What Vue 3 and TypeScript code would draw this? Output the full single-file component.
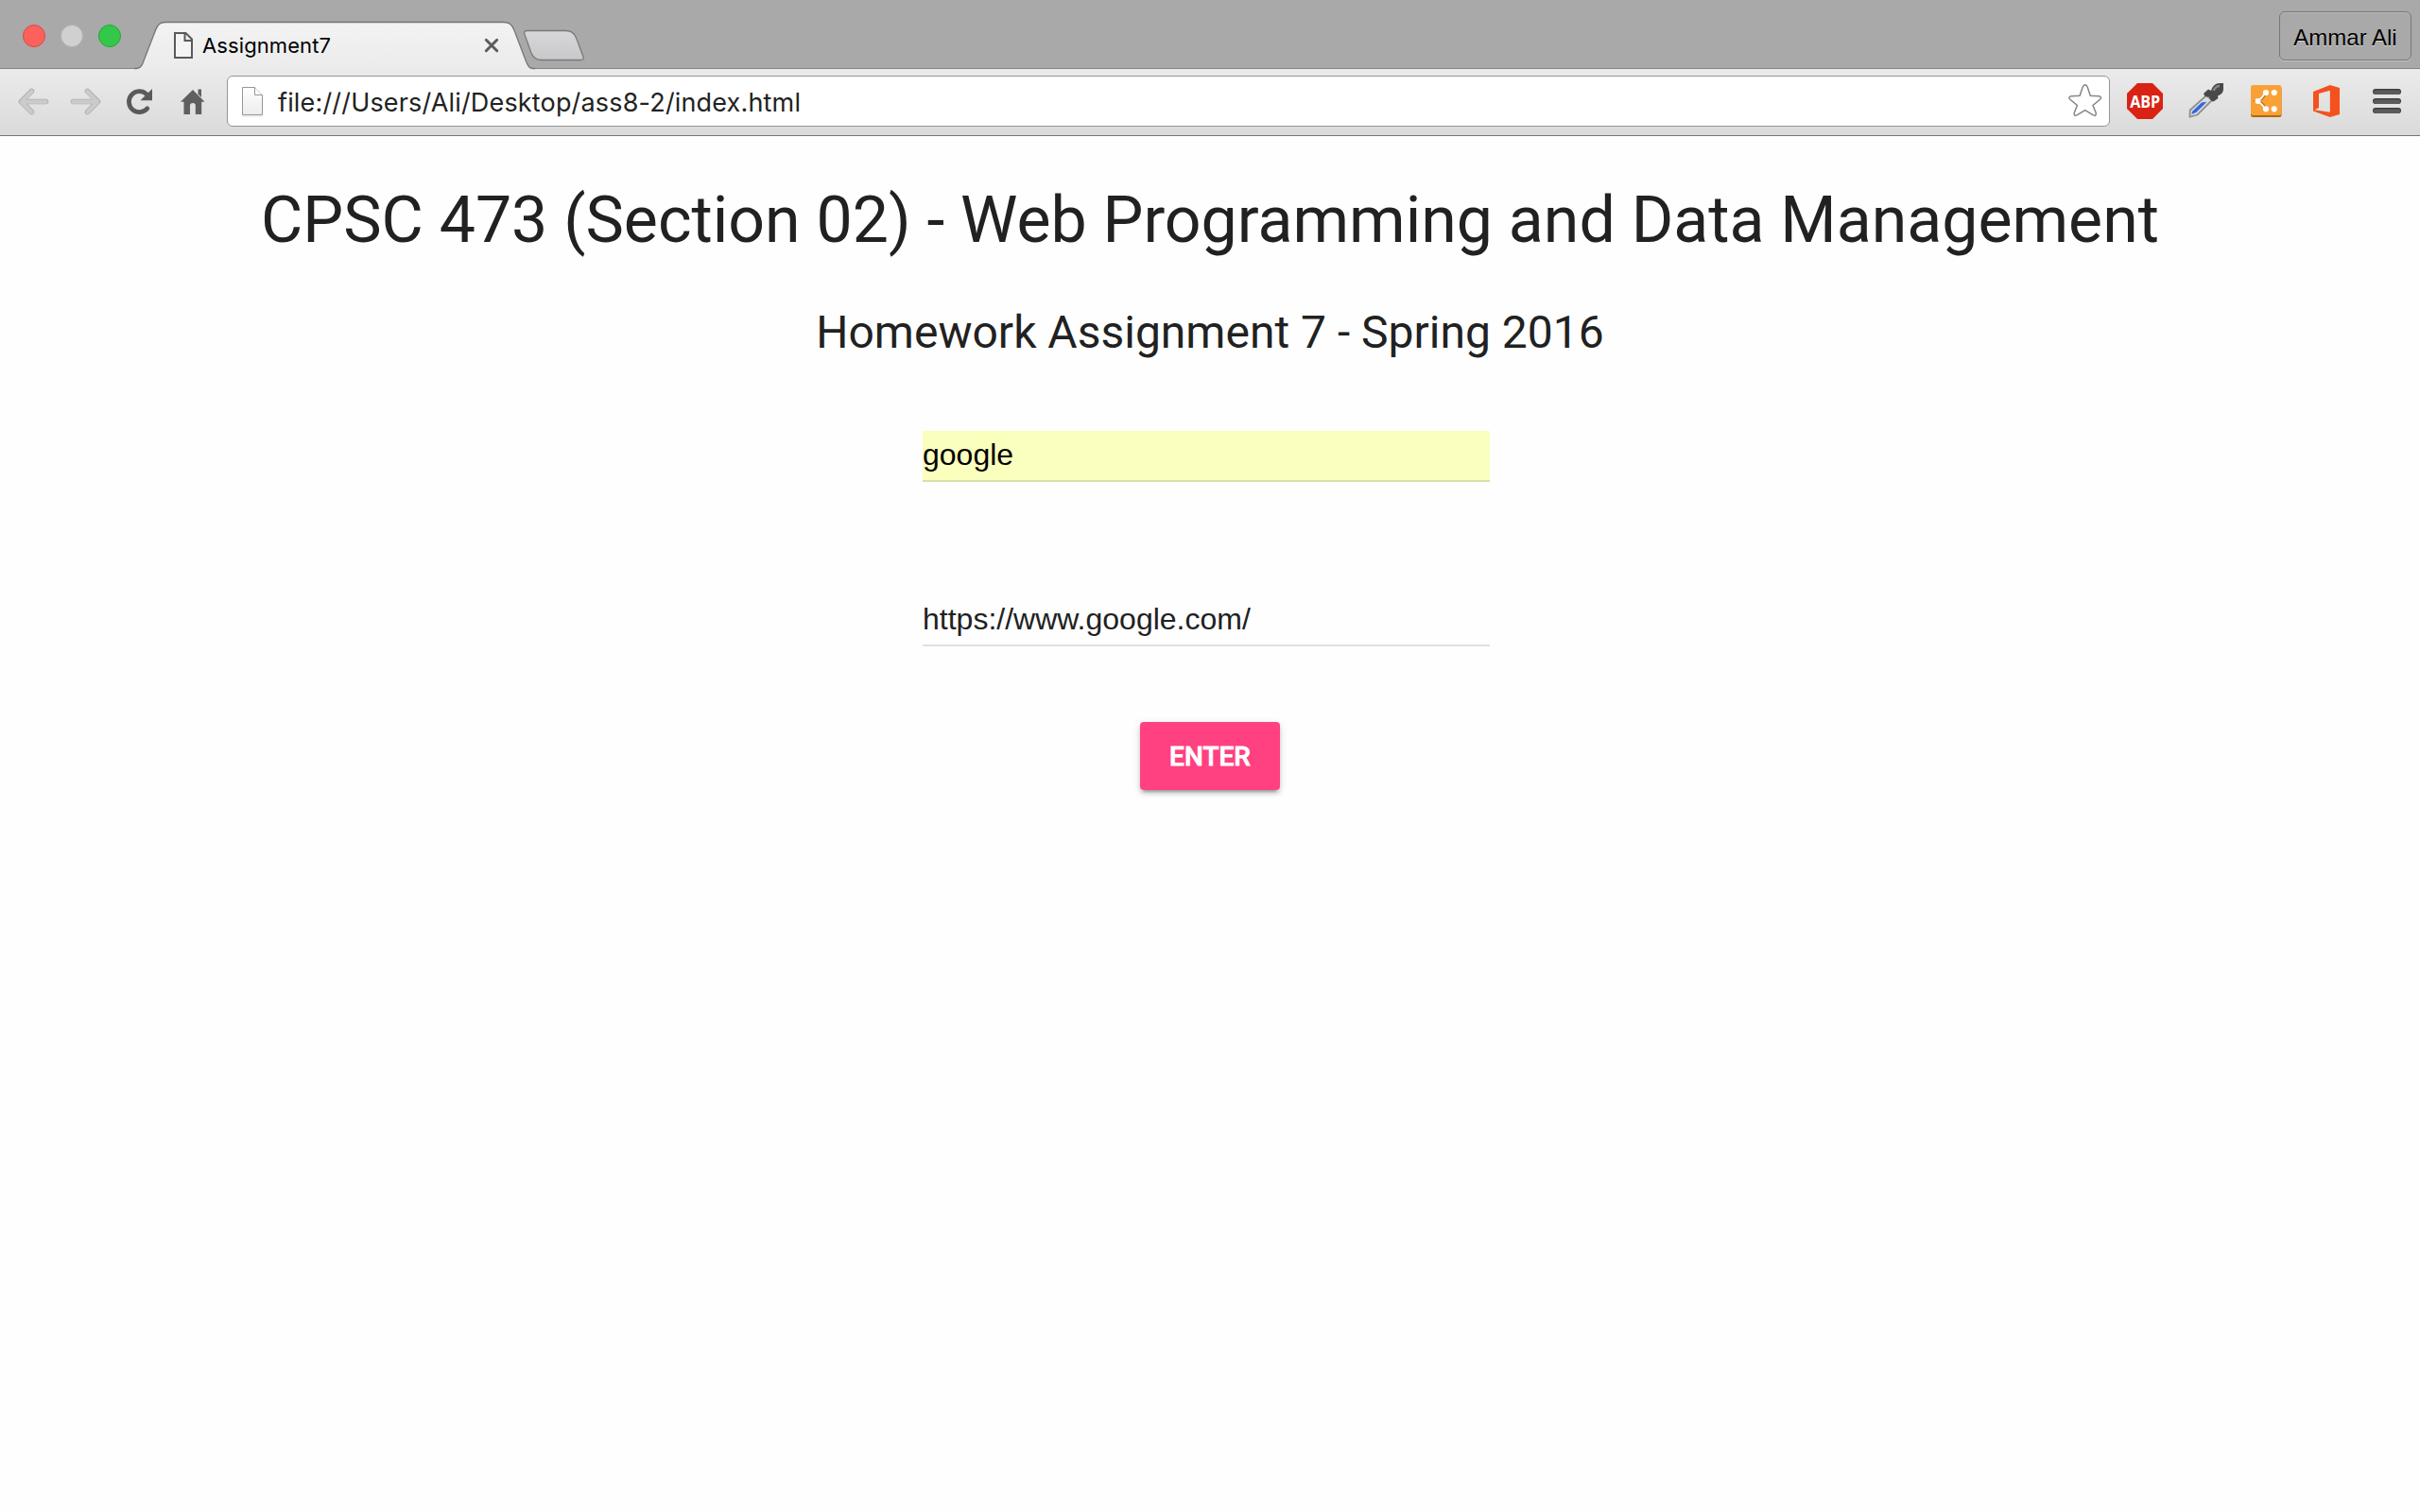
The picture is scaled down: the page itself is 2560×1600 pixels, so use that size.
<script setup lang="ts">
import { ref } from 'vue'

const tabTitle = ref('Assignment7')
const profile = ref('Ammar Ali')
const address = ref('file:///Users/Ali/Desktop/ass8-2/index.html')
const siteName = ref('google')
const siteLink = ref('https://www.google.com/')
</script>

<template>
  <div class="window">
    <header class="tabstrip">
      <div class="lights">
        <span class="light close"></span>
        <span class="light idle"></span>
        <span class="light zoom"></span>
      </div>
      <div class="tab">
        <svg class="tab-shape" viewBox="142 20 424 54" width="424" height="54">
          <defs>
            <linearGradient id="tabFill" x1="0" y1="0" x2="0" y2="1">
              <stop offset="0" stop-color="#f3f3f3" />
              <stop offset="1" stop-color="#ebebeb" />
            </linearGradient>
          </defs>
          <path d="M142 74V72.5H144C148 72.5 149.500 70.500 151 67L164.500 32C167 26 169 23.500 175 23.500H533C539 23.500 541.500 26 544 32L556.500 65C559 71 560.500 72.500 564 72.500H566V74Z" fill="url(#tabFill)" />
          <path d="M142 72.5H144C148 72.5 149.500 70.500 151 67L164.500 32C167 26 169 23.500 175 23.500H533C539 23.500 541.500 26 544 32L556.500 65C559 71 560.500 72.500 564 72.500H566" fill="none" stroke="#767676" stroke-width="1.3" />
        </svg>
        <svg class="tab-page" viewBox="184 34 20 28" width="20" height="28">
          <path d="M185 35H196.500L203 41.500V61H185ZM195.500 35V43H203" fill="#f4f4f4" stroke="#5a5a5a" stroke-width="2" />
        </svg>
        <span class="tab-title">{{ tabTitle }}</span>
        <svg class="tab-close" viewBox="512 40 16 16" width="16" height="16">
          <path d="M514.300 42.300L525.700 53.700M525.700 42.300L514.300 53.700" stroke="#5c5c5c" stroke-width="3" stroke-linecap="round" />
        </svg>
      </div>
      <svg class="new-tab" viewBox="553 31 66 34" width="66" height="34">
        <defs>
          <linearGradient id="newFill" x1="0" y1="0" x2="0" y2="1">
            <stop offset="0" stop-color="#d8d8da" />
            <stop offset="1" stop-color="#c8c8ca" />
          </linearGradient>
        </defs>
        <path d="M557.500 32.500H599C605 32.500 607.500 35 609.500 40L617 60C618 62.500 616.500 63.500 614.500 63.500H573C567 63.500 564 61 562 56L555 36.500C554 34 555 32.500 557.500 32.500Z" fill="url(#newFill)" stroke="#7a7a7a" stroke-width="1.300" />
      </svg>
      <div class="profile">{{ profile }}</div>
    </header>

    <nav class="toolbar">
      <svg class="back" viewBox="19 92 34 31" width="34" height="31">
        <g fill="none" stroke-linecap="round" stroke-linejoin="round">
          <path d="M33.500 96.500L22.500 107.500L33.500 118.500M23.500 107.500H48.500" stroke="#adadad" stroke-width="5.600" />
          <path d="M33.500 96.800L22.800 107.700L33.500 118.600M23.500 107.700H48.500" stroke="#cbcbcb" stroke-width="4.200" />
        </g>
      </svg>
      <svg class="forward" viewBox="73 92 34 31" width="34" height="31">
        <g fill="none" stroke-linecap="round" stroke-linejoin="round">
          <path d="M92.500 96.500L103.500 107.500L92.500 118.500M102.500 107.500H77.500" stroke="#adadad" stroke-width="5.600" />
          <path d="M92.500 96.800L103.200 107.700L92.500 118.600M102.500 107.700H77.500" stroke="#cbcbcb" stroke-width="4.200" />
        </g>
      </svg>
      <svg class="reload" viewBox="132 92 32 31" width="32" height="31">
        <path d="M155.800 114.800A11 11 0 1 1 154.800 99.500" fill="none" stroke="#5a5a5a" stroke-width="4.800" stroke-linecap="round" />
        <path d="M161 94V106.300H148.500Z" fill="#5a5a5a" />
      </svg>
      <svg class="home" viewBox="190 92 28 31" width="28" height="31">
        <path d="M204 95L216.500 107.800H213.200V121H206.800V111.500Q206.800 109 204 109Q201 109 201 111.500V121H194.500V107.800H191Z" fill="#5f5f5f" />
        <path d="M209.500 94.500H213V103L209.500 99.500Z" fill="#5f5f5f" />
      </svg>
      <div class="omnibox">
        <svg class="doc" viewBox="254 90 26 34" width="26" height="34">
          <defs>
            <linearGradient id="docFill" x1="0" y1="0" x2="0" y2="1">
              <stop offset="0" stop-color="#ffffff" />
              <stop offset="1" stop-color="#ececec" />
            </linearGradient>
          </defs>
          <path d="M256.500 92.500H269.500L277.500 100.500V121.500H256.500Z" fill="url(#docFill)" stroke="#979797" />
          <path d="M269.500 92.500V100.500H277.500" fill="#fff" stroke="#979797" />
          <path d="M256 123H278" stroke="#e0e0e0" />
        </svg>
        <span class="address">{{ address }}</span>
        <svg class="star" viewBox="2187 88 38 36" width="38" height="36">
          <path d="M2203.300 91.800Q2205.700 87.800 2208.100 91.800L2211.300 101.200L2220.300 101.800Q2224.300 102.500 2221.200 105.500L2214 111.500L2217.200 119.500Q2217.900 123.600 2214 121.700L2205.700 116.600L2197.400 121.700Q2193.500 123.600 2194.200 119.500L2197.400 111.500L2190.200 105.500Q2187.100 102.500 2191.100 101.800L2200.100 101.200Z" fill="#fff" stroke="#858585" stroke-width="1.500" />
        </svg>
      </div>
      <svg class="abp" viewBox="2250 88 38 38" width="38" height="38">
        <path d="M2261 88H2277L2288 99V115L2277 126H2261L2250 115V99Z" fill="#d92214" />
        <text x="2253.200" y="113.800" textLength="32" lengthAdjust="spacingAndGlyphs" class="abp-text">ABP</text>
      </svg>
      <svg class="dropper" viewBox="2315 87 38 38" width="38" height="38">
        <path d="M2334 101L2340 106L2324.500 121.500L2316.500 123.500L2316.800 116.500Z" fill="#d9dcdf" stroke="#8f908d" stroke-width="1.800" />
        <path d="M2329 108.500L2334.500 107.800L2323.500 118.800L2318.500 121L2319 118Z" fill="#3564e0" />
        <path d="M2331 99L2336 94.500L2339 96Q2341.500 88 2348 88H2352V95Q2351.500 99.500 2346 101.500L2346.500 104L2341.500 107.500Q2338 107 2337 102.500Q2332 103 2331 99Z" fill="#494949" />
        <path d="M2341.500 96Q2344 91 2348 91" fill="none" stroke="#858585" stroke-width="2.500" />
      </svg>
      <svg class="share" viewBox="2380 89 34 36" width="34" height="36">
        <rect x="2381" y="92" width="32.500" height="32" rx="2.500" fill="#ad6812" />
        <rect x="2381" y="90" width="32.500" height="32" rx="2.500" fill="#f9a137" />
        <path d="M2396.500 98Q2394 105 2388 107Q2394 109 2396.500 115.300" fill="none" stroke="#b5711c" stroke-width="3" />
        <path d="M2396.500 98Q2393 104 2388 107Q2393 110 2396.500 115.300" fill="none" stroke="#fff" stroke-width="1.800" />
        <g fill="#fff">
          <circle cx="2397" cy="98" r="3.100" /><circle cx="2405.700" cy="98" r="3.100" />
          <circle cx="2388.500" cy="107" r="3" />
          <circle cx="2397" cy="115.300" r="3.100" /><circle cx="2405.700" cy="115.300" r="3.100" />
        </g>
      </svg>
      <svg class="office" viewBox="2446 89 30 36" width="30" height="36">
        <path fill-rule="evenodd" d="M2447 97L2464.800 90L2475 93V121L2464.800 124L2447 117.500ZM2453 99V114L2448.500 116.300L2464.800 118.800V95.800Z" fill="#f4511e" />
      </svg>
      <svg class="menu" viewBox="2510 93 30 28" width="30" height="28">
        <g v-for="y in [94, 104, 114]" :key="y">
          <rect x="2510" :y="y" width="30" height="6" rx="3" fill="#3a3a3a" />
          <rect x="2510.800" :y="y + 1.200" width="28.400" height="4.800" rx="2.400" fill="#5b5b5b" />
        </g>
      </svg>
    </nav>

    <main class="page">
      <h1>CPSC 473 (Section 02) - Web Programming and Data Management</h1>
      <h2>Homework Assignment 7 - Spring 2016</h2>
      <form class="form" @submit.prevent>
        <input v-model="siteName" class="field filled" type="text" />
        <input v-model="siteLink" class="field" type="text" />
        <button class="enter" type="submit">ENTER</button>
      </form>
    </main>
  </div>
</template>

<style>
body {
  margin: 0;
  background: #fff;
}
</style>

<style scoped>
.window {
  width: 2560px;
  height: 1600px;
  overflow: hidden;
  display: flex;
  flex-direction: column;
  background: #fefefe;
}
svg {
  display: block;
  flex: none;
}
.tabstrip {
  box-sizing: border-box;
  height: 73px;
  flex: none;
  display: flex;
  align-items: flex-start;
  background: #a9a9a9;
  border-bottom: 1px solid #858585;
}
.lights {
  display: flex;
  gap: 16px;
  padding: 26px 0 0 24px;
  width: 118px;
}
.light {
  box-sizing: border-box;
  width: 24px;
  height: 24px;
  border-radius: 50%;
}
.close {
  background: #fc615c;
  border: 1px solid #de4644;
}
.idle {
  background: #d0d0d0;
  border: 1px solid #b4b4b4;
}
.zoom {
  background: #34c84a;
  border: 1px solid #21a833;
}
.tab {
  position: relative;
  width: 411px;
  height: 73px;
  display: flex;
  align-items: flex-start;
}
.tab-shape {
  position: absolute;
  left: 0;
  top: 20px;
}
.tab-page {
  position: relative;
  margin: 34px 0 0 42px;
}
.tab-title {
  position: relative;
  margin: 34px 0 0 10px;
  width: 298px;
  font: 22px/28px Inter, sans-serif;
  letter-spacing: 0.100px;
  color: #000;
}
.tab-close {
  position: relative;
  margin-top: 40px;
}
.new-tab {
  position: relative;
  margin-top: 31px;
}
.profile {
  box-sizing: border-box;
  margin: 12px 9px 0 auto;
  width: 140px;
  height: 52px;
  border: 1px solid #777;
  border-radius: 6px;
  box-shadow: 0 1px 0 #c4c4c4, inset 0 1px 0 #b8b8b8;
  font: 24px/54px "Liberation Sans", Arial, sans-serif;
  text-align: center;
  color: #000;
  text-shadow: 0 1px 0 #d8d8d8;
}
.toolbar {
  box-sizing: border-box;
  height: 71px;
  flex: none;
  display: flex;
  align-items: center;
  padding-bottom: 2px;
  background: linear-gradient(#ebebeb, #dadada);
  border-bottom: 1px solid #777;
}
.back,
.forward,
.reload,
.home {
  margin-top: 1px;
}
.back {
  margin-left: 19px;
}
.forward {
  margin-left: 20px;
}
.reload {
  margin-left: 25px;
}
.home {
  margin-left: 26px;
}
.omnibox {
  box-sizing: border-box;
  width: 1992px;
  height: 54px;
  margin-left: 22px;
  flex: none;
  display: flex;
  align-items: center;
  padding: 0 6px 0 13px;
  background: #fff;
  border: 1px solid #959595;
  border-radius: 6px;
}
.address {
  flex: 1;
  margin: 3px 0 0 14px;
  font: 27px/36px Inter, sans-serif;
  letter-spacing: 0.170px;
  color: #222;
  white-space: nowrap;
}
.star {
  margin-top: -2px;
}
.abp {
  margin-left: 18px;
}
.abp-text {
  font: bold 17px "Open Sans", sans-serif;
  fill: #fff;
}
.dropper {
  margin: -2px 0 0 27px;
}
.share {
  margin-left: 27px;
}
.office {
  margin-left: 32px;
}
.menu {
  margin-left: 34px;
}
.page {
  display: flex;
  flex-direction: column;
  align-items: center;
}
h1,
h2 {
  margin: 0;
  font-family: Roboto, sans-serif;
  font-weight: 400;
  color: #212121;
  white-space: nowrap;
}
h1 {
  margin-top: 49px;
  font-size: 68px;
  line-height: 80px;
}
h2 {
  margin-top: 47px;
  font-size: 48px;
  line-height: 64px;
}
.form {
  display: flex;
  flex-direction: column;
  align-items: center;
  margin-top: 72px;
}
.field {
  box-sizing: border-box;
  width: 600px;
  height: 54px;
  margin: 0 8px 0 0;
  padding: 0 0 2px;
  border: 0;
  border-bottom: 2px solid #e0e0e0;
  border-radius: 0;
  outline: 0;
  background: transparent;
  font: 32px "Liberation Sans", Arial, sans-serif;
  color: #212121;
}
.filled {
  margin-bottom: 120px;
  background: #faffbd;
  border-color: #dde0a6;
  color: #000;
}
.enter {
  width: 148px;
  height: 72px;
  margin-top: 80px;
  padding: 1px 0 0;
  border: 0;
  border-radius: 4px;
  background: #ff4081;
  box-shadow: 0 4px 4px rgba(0, 0, 0, 0.14), 0 6px 2px -4px rgba(0, 0, 0, 0.2), 0 2px 10px rgba(0, 0, 0, 0.12);
  font: 500 28px/71px Roboto, sans-serif;
  -webkit-text-stroke: 0.8px #fff;
  color: #fff;
}
</style>
